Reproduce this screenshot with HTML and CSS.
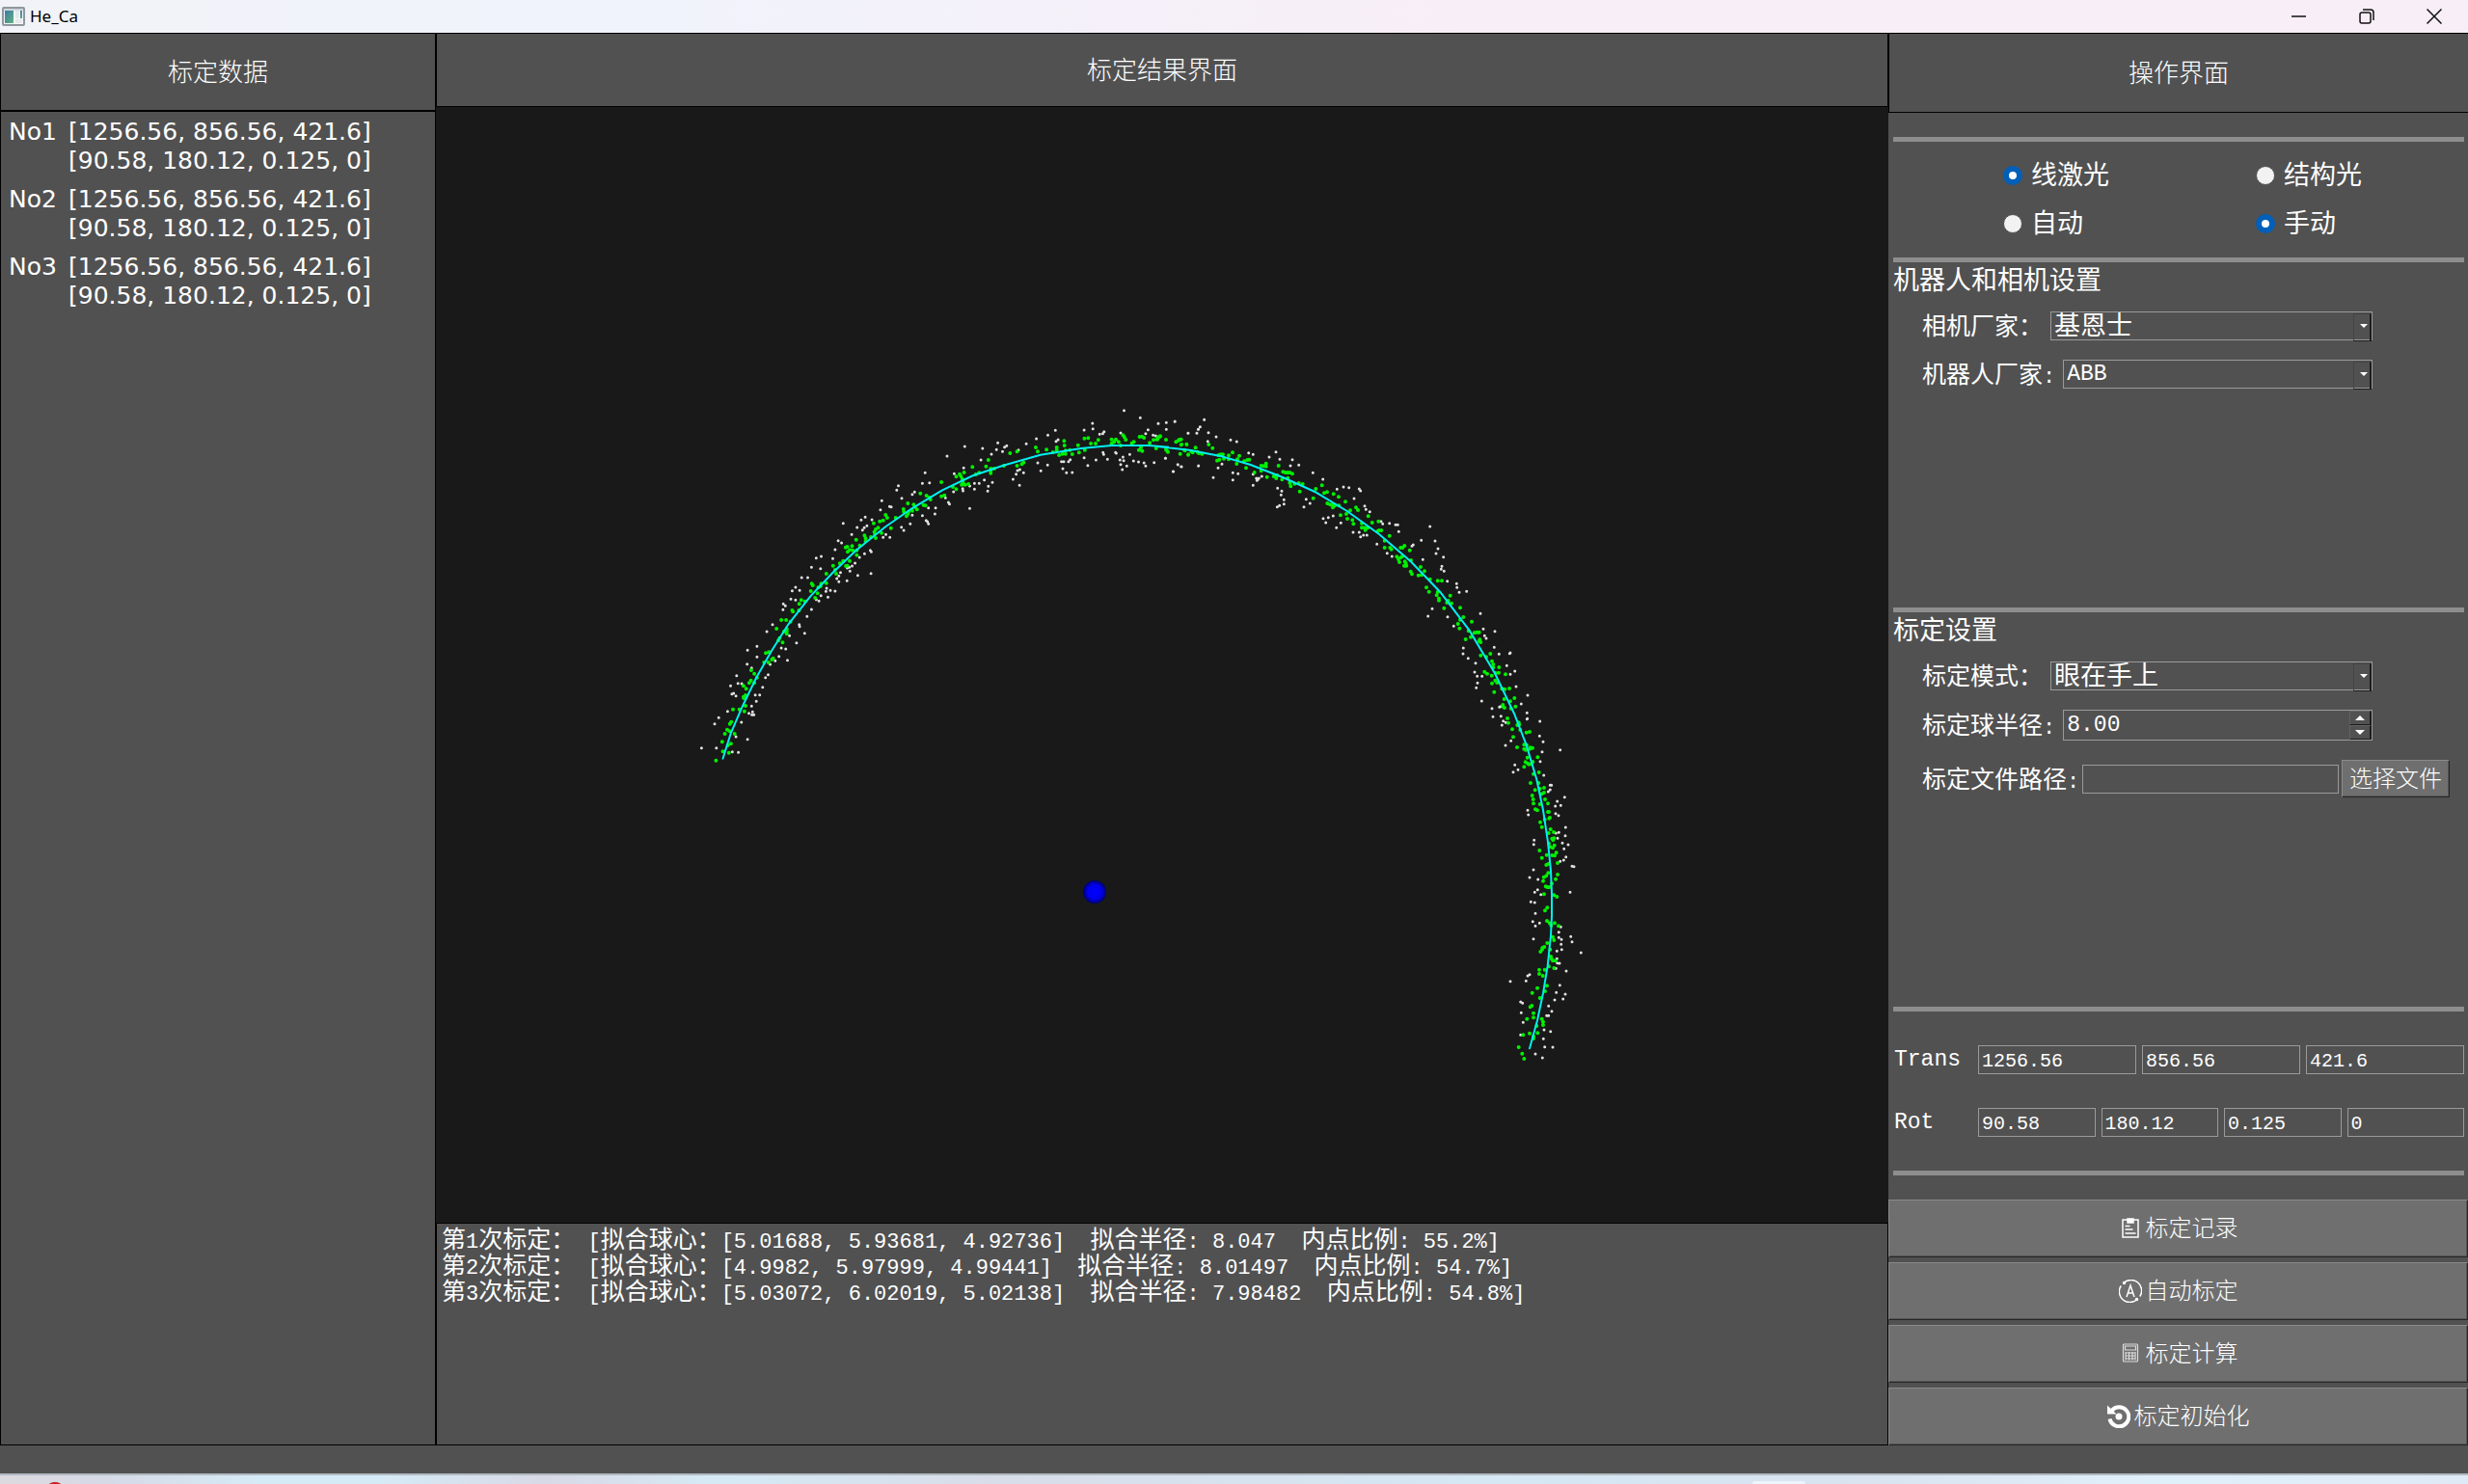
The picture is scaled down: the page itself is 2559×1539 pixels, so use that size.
FILE: index.html
```html
<!DOCTYPE html>
<html lang="zh-CN">
<head>
<meta charset="utf-8">
<title>He_Ca</title>
<link rel="stylesheet" href="styles.css">
</head>
<body>
<header class="titlebar">
  <svg class="app-icon" width="24" height="20" viewBox="0 0 24 20" aria-hidden="true">
    <defs><linearGradient id="pane" x1="0" y1="0" x2="1" y2="1"><stop offset="0" stop-color="#3f78a8"/><stop offset="1" stop-color="#5cb57c"/></linearGradient></defs>
    <rect x="1" y="1" width="22" height="18" rx="1" fill="#f4f6f8" stroke="#8f979f" stroke-width="2"/>
    <rect x="2" y="2" width="20" height="2" fill="#cfd6dc"/>
    <rect x="3" y="4" width="9" height="13" fill="url(#pane)"/>
    <rect x="14" y="4" width="4" height="8" fill="#e6e9ec"/>
    <rect x="19" y="4" width="2" height="8" fill="url(#pane)"/>
    <rect x="14" y="13" width="7" height="4" fill="#e6e9ec"/>
  </svg>
  <h1 class="app-name">He_Ca</h1>
  <div class="window-controls">
    <button type="button" aria-label="最小化"><svg width="16" height="16" viewBox="0 0 16 16"><path d="M0 8h15"/></svg></button>
    <button type="button" aria-label="还原"><svg width="16" height="16" viewBox="0 0 16 16"><rect x="1" y="4" width="11" height="11" rx="2"/><path d="M4 1h8a3 3 0 0 1 3 3v8"/></svg></button>
    <button type="button" aria-label="关闭"><svg width="16" height="16" viewBox="0 0 16 16"><path d="M0.500 0.500l15 15M15.500 0.500l-15 15"/></svg></button>
  </div>
</header>

<main class="workspace">
  <section class="data-panel">
    <h2 class="panel-title">标定数据</h2>
    <dl class="pose-list">
      <div class="pose"><dt>No1</dt><dd>[1256.56, 856.56, 421.6]<br>[90.58, 180.12, 0.125, 0]</dd></div>
      <div class="pose"><dt>No2</dt><dd>[1256.56, 856.56, 421.6]<br>[90.58, 180.12, 0.125, 0]</dd></div>
      <div class="pose"><dt>No3</dt><dd>[1256.56, 856.56, 421.6]<br>[90.58, 180.12, 0.125, 0]</dd></div>
    </dl>
  </section>

  <section class="result-panel">
    <h2 class="panel-title">标定结果界面</h2>
    <div class="viewer">
      <svg id="cloud" viewBox="452 111 1506 1157" role="img" aria-label="拟合点云">
        <defs><radialGradient id="ball"><stop offset="0" stop-color="#0000ff"/><stop offset="0.600" stop-color="#0000ee"/><stop offset="1" stop-color="#000070"/></radialGradient></defs>
        <path id="outliers" class="outliers"/>
        <path id="inliers" class="inliers"/>
        <path id="fit" class="fit"/>
        <circle cx="1135" cy="925" r="12" fill="url(#ball)"/>
      </svg>
    </div>
    <div class="log">
      <p>第<span class="num">1</span>次标定：<span class="num"> [</span>拟合球心：<span class="num">[5.01688, 5.93681, 4.92736]  </span>拟合半径<span class="num">: 8.047  </span>内点比例<span class="num">: 55.2%]</span></p>
      <p>第<span class="num">2</span>次标定：<span class="num"> [</span>拟合球心：<span class="num">[4.9982, 5.97999, 4.99441]  </span>拟合半径<span class="num">: 8.01497  </span>内点比例<span class="num">: 54.7%]</span></p>
      <p>第<span class="num">3</span>次标定：<span class="num"> [</span>拟合球心：<span class="num">[5.03072, 6.02019, 5.02138]  </span>拟合半径<span class="num">: 7.98482  </span>内点比例<span class="num">: 54.8%]</span></p>
    </div>
  </section>

  <section class="control-panel">
    <h2 class="panel-title">操作界面</h2>
    <form class="controls">
      <div class="modes">
        <label class="mode"><input type="radio" name="light" checked>线激光</label>
        <label class="mode"><input type="radio" name="light">结构光</label>
        <label class="mode"><input type="radio" name="drive">自动</label>
        <label class="mode"><input type="radio" name="drive" checked>手动</label>
      </div>
      <fieldset class="group group-devices">
        <legend>机器人和相机设置</legend>
        <div class="field">
          <label for="camera">相机厂家：</label>
          <span class="combo"><select id="camera"><option>基恩士</option></select></span>
        </div>
        <div class="field">
          <label for="robot">机器人厂家<span class="num">:</span></label>
          <span class="combo"><select id="robot" class="num"><option>ABB</option></select></span>
        </div>
      </fieldset>
      <fieldset class="group group-calibration">
        <legend>标定设置</legend>
        <div class="field">
          <label for="mode">标定模式：</label>
          <span class="combo"><select id="mode"><option>眼在手上</option></select></span>
        </div>
        <div class="field">
          <label for="radius">标定球半径<span class="num">:</span></label>
          <span class="spin"><input id="radius" class="num" type="number" step="0.01" value="8.00"><span class="spin-buttons"><button type="button" class="up" aria-label="增加"></button><button type="button" class="down" aria-label="减少"></button></span></span>
        </div>
        <div class="field file-field">
          <label for="path">标定文件路径<span class="num">:</span></label>
          <input id="path" class="box" type="text">
          <button type="button" class="push browse">选择文件</button>
        </div>
      </fieldset>
      <div class="coords">
        <div class="coord-row">
          <label for="tx">Trans</label>
          <input id="tx" class="box" type="text" value="1256.56">
          <input class="box" type="text" value="856.56" aria-label="Trans Y">
          <input class="box" type="text" value="421.6" aria-label="Trans Z">
        </div>
        <div class="coord-row">
          <label for="rx">Rot</label>
          <input id="rx" class="box" type="text" value="90.58">
          <input class="box" type="text" value="180.12" aria-label="Rot Y">
          <input class="box" type="text" value="0.125" aria-label="Rot Z">
          <input class="box" type="text" value="0" aria-label="Rot W">
        </div>
      </div>
      <div class="actions">
        <button type="button" class="push"><svg width="24" height="24" viewBox="0 0 24 24" class="line"><rect x="4" y="3" width="16" height="18"/><path d="M6.500 9.500h5M6.500 13h8M6.500 17h11"/><path d="M9 2h6v4H9z" fill="#fff"/></svg>标定记录</button>
        <button type="button" class="push"><svg width="24" height="24" viewBox="0 0 24 24" class="line"><path d="M5 3.500A11 11 0 0 1 21.800 17.500M19 20.500A11 11 0 0 1 2.200 6.500M8 18l4-12 4 12M9.500 14h5"/><circle cx="5.500" cy="3.500" r="1"/><circle cx="18.500" cy="20.500" r="1"/></svg>自动标定</button>
        <button type="button" class="push"><svg width="24" height="24" viewBox="0 0 24 24" class="line soft"><rect x="4.500" y="2" width="15" height="18" rx="1"/><path d="M6.500 4h11v4h-11zM6.500 11h11M6.500 14h11M6.500 17h11M7 10v8.500M10.500 10v8.500M14 10v8.500M17 10v8.500"/></svg>标定计算</button>
        <button type="button" class="push"><svg width="24" height="24" viewBox="0 0 24 24"><path d="M4.500 6A10 10 0 1 1 2.500 14.500" fill="none" stroke="#fff" stroke-width="4"/><path d="M0 0.500L0 9.500h9.500L6.500 6.500z" fill="#fff"/><circle cx="12" cy="12" r="3.500" fill="#fff"/></svg>标定初始化</button>
      </div>
    </form>
  </section>
</main>
<div class="statusbar"></div>
<footer class="taskbar">
  <svg class="tray-dot" width="12" height="3" viewBox="0 0 12 3" aria-hidden="true"><ellipse cx="6" cy="5" rx="7" ry="4" fill="#c5231c"/></svg>
  <span class="task-tile"></span>
</footer>
<script src="cloud.js"></script>
</body>
</html>
```
FILE: styles.css
```css
* { box-sizing: border-box; }

:root {
  --panel: #515151;
  --rule: #8e8e8e;
  --cjk: "Liberation Sans", "Noto Sans CJK SC", sans-serif;
  --mono: "Liberation Mono", "Noto Sans CJK SC", monospace;
}

body {
  margin: 0;
  min-height: 100vh;
  display: flex;
  flex-direction: column;
  background: var(--panel);
  color: #fff;
  font: 25px/30px var(--cjk);
}

h1, h2, p, dl, dd { margin: 0; font-weight: inherit; }
button, input, select { font: inherit; color: inherit; margin: 0; border-radius: 0; }

.num { font-family: var(--mono); font-size: 22px; line-height: 1; white-space: pre; }

/* Title bar */
.titlebar {
  display: flex;
  align-items: center;
  height: 35px;
  padding-left: 2px;
  border-bottom: 1px solid #000;
  background: linear-gradient(90deg, #f1f3f8, #f0f3fb 25%, #f8eef7 60%, #f8eef7);
  color: #000;
}
.app-icon { margin-top: -1px; }
.app-name { flex: 1; margin-left: 5px; font: 17px/34px "Noto Sans", sans-serif; }
.window-controls { display: flex; height: 34px; }
.window-controls button {
  width: 70px;
  padding: 0;
  border: 0;
  background: none;
}
.window-controls svg {
  display: block;
  margin: auto;
  fill: none;
  stroke: #111;
  stroke-width: 1.500;
}

/* Columns */
.workspace {
  flex: 1;
  display: grid;
  grid-template-columns: minmax(0, 452fr) minmax(0, 1506fr) minmax(0, 601fr);
}
.workspace > section { display: flex; flex-direction: column; }
.panel-title {
  display: flex;
  align-items: center;
  justify-content: center;
  font-size: 26px;
  font-weight: 300;
}

.data-panel { border: 1px solid #000; border-top: 0; }
.data-panel .panel-title { height: 81px; border-bottom: 2px solid #000; }
.pose-list {
  padding: 6px 8px;
  display: flex;
  flex-direction: column;
  gap: 10px;
  font: 25px/30px "DejaVu Sans", sans-serif;
}
.pose { display: flex; }
.pose dt { width: 62px; }

.result-panel .panel-title { height: 76px; border: 1px solid #000; border-top: 0; }
.viewer { flex: 1; min-height: 0; display: flex; background: #191919; }
.viewer svg { width: 100%; display: block; }
.viewer path { fill: none; stroke-linecap: round; }
.outliers { stroke: #e2e2e2; stroke-width: 3; }
.inliers { stroke: #00f000; stroke-width: 4; }
.fit { stroke: #00f0f0; stroke-width: 2; }
.log {
  height: 231px;
  padding: 3px 5px;
  border: 1px solid #000;
  line-height: 27px;
}
.log p { height: 27px; white-space: nowrap; }

/* Control panel */
.control-panel .panel-title {
  height: 82px;
  border-left: 1px solid #000;
  border-bottom: 1px solid #000;
}
.controls { flex: 1; display: flex; flex-direction: column; padding-top: 25px; }
.modes, .group, .coords {
  margin: 0 4px 0 5px;
  border: 0 solid var(--rule);
  border-top-width: 5px;
}
.modes {
  display: grid;
  grid-template-columns: 262fr 216fr;
  grid-auto-rows: 50px;
  padding: 10px 0 10px 114px;
  font-size: 27px;
}
.mode { display: flex; align-items: center; gap: 9px; }
.mode input {
  appearance: none;
  width: 20px;
  height: 20px;
  border: 1px solid var(--panel);
  border-radius: 50%;
  background: #f2f2f2;
}
.mode input:checked { border: 6px solid #005fb8; background: #fff; }

.group { min-width: 0; padding: 0; display: flex; flex-direction: column; gap: 20px; }
.group-devices { flex: 363; }
.group-calibration { flex: 414; }
.group legend {
  float: left;
  padding: 0;
  height: 38px;
  margin-bottom: -7px;
  font-size: 27px;
  line-height: 38px;
}
.field {
  display: flex;
  align-items: center;
  gap: 8px;
  margin-left: 30px;
  margin-right: 95px;
}
.field label { height: 30px; white-space: nowrap; }
.combo, .spin { position: relative; flex: 1; display: flex; }
.combo select, .spin input, .box {
  width: 100%;
  min-width: 0;
  height: 30px;
  border: 1px solid #9a9a9a;
  background: var(--panel);
  padding: 0 3px;
  line-height: 28px;
  outline: 0;
}
.combo select { appearance: none; font-size: 27px; }
.combo select.num, .spin .num { font-size: 23px; }
.combo::before {
  content: "";
  position: absolute;
  top: 2px;
  right: 1px;
  width: 16px;
  height: 27px;
  border: 1px solid #444;
  border-right: 2px solid #1c1c1c;
  border-bottom-color: #1c1c1c;
  pointer-events: none;
}
.combo::after, .up::after, .down::after {
  content: "";
  display: block;
  border: 4px solid transparent;
  border-bottom: 0;
  border-top-color: #fff;
}
.combo::after { position: absolute; right: 5px; top: 13px; pointer-events: none; }

.spin input { height: 32px; appearance: textfield; }
.spin input::-webkit-inner-spin-button { display: none; }
.spin-buttons {
  position: absolute;
  top: 1px;
  right: 1px;
  bottom: 1px;
  width: 23px;
  display: flex;
  flex-direction: column;
}
.spin-buttons button {
  flex: 1;
  padding: 0;
  display: flex;
  align-items: center;
  justify-content: center;
  background: var(--panel);
  border: 1px solid #636363;
  border-right: 2px solid #1c1c1c;
  border-bottom-color: #1c1c1c;
}
.up::after, .down::after { border-width: 5px 5px 0; }
.up::after { transform: rotate(180deg); }

.file-field { gap: 3px; margin-right: 15px; }

.push {
  border: 1px solid #262626;
  border-top-color: #8a8a8a;
  border-left-color: #8a8a8a;
  background: #6f6f6f;
  box-shadow: inset -1px -1px #555;
  font-size: 24px;
  font-weight: 300;
}
.browse { flex: none; width: 112px; height: 39px; padding: 0; }

.coords {
  padding: 35px 0 35px 1px;
  display: flex;
  flex-direction: column;
  gap: 35px;
  border-bottom-width: 5px;
  font-family: var(--mono);
  font-size: 22px;
}
.coord-row { display: flex; gap: 6px; }
.coord-row label { width: 81px; flex: none; padding-top: 1px; font-size: 23px; line-height: 29px; }
.coord-row .box { flex: 1; padding-top: 2px; font-size: 20px; line-height: 26px; }

.actions { margin-top: 25px; display: flex; flex-direction: column; gap: 5px; }
.actions .push {
  height: 60px;
  display: flex;
  align-items: center;
  justify-content: center;
  gap: 4px;
}
.line { fill: none; stroke: #fff; stroke-width: 1.500; }
.soft { stroke: #dcdcdc; stroke-width: 1.200; }

/* Bottom strips */
.statusbar { height: 29px; }
.taskbar {
  height: 11px;
  position: relative;
  border-top: 2px solid #b0b8c0;
  background: linear-gradient(90deg, #dcdadf, #d6d9e6 4%, #d5ecf7 11%, #d5ecf7 15%, #d8d9e6 22%, #d5eaf5 29%, #d8dde9 40%, #d5e8f4 60%, #d9e3f0 75%, #e0f0fb 88%, #dfeaf6);
}
.tray-dot { position: absolute; left: 51px; bottom: 0; }
.task-tile {
  position: absolute;
  left: 71%;
  bottom: 0;
  width: 55px;
  height: 3px;
  border-radius: 4px 4px 0 0;
  background: #eef4fb;
}
```
FILE: cloud.js
```js
// Scan sweeps of the calibration sphere. Each sweep has its own origin and
// step size; x,y pairs are in sweep steps.
const sweeps = [
  {
    x: 700, y: 400, sx: 550 / 1568, sy: 1 / 3,
    out: "78 1127 122 1127 169 1139 187 1141 214 1100 180 1092 117 1052 129 1033 155 1013 196 1047 218 1019 229 1015 227 1024 233 1024 226 997 240 982 237 962 250 962 259 938 164 934 186 926 197 927 168 959 173 957 180 965 182 902 226 878 213 866 267 908 275 899 242 844 214 823 242 811 281 867 296 856 307 842 332 854 314 816 327 819 359 800 338 778 271 765 288 743 383 770 367 743 368 749 390 718 403 696 319 697 326 685 320 679 342 664 356 667 346 638 368 637 356 627 374 597 392 597 403 565 430 569 417 536 432 531 466 538 417 665 425 670 431 653 452 658 446 640 448 630 459 637 473 639 484 610 478 600 484 592 489 581 508 607 540 590 579 584 517 577 509 567 515 565 523 561 532 552 545 534 560 523 577 512 580 517 473 510 482 482 492 489 522 463 497 428 538 441 554 449 559 442 567 436 550 418 562 409 582 417 615 472 635 472 623 463 607 386 611 358 634 376 639 377 676 450 669 440 695 430 701 403 670 350 701 338 708 331 655 325 660 311 731 404 742 419 746 423 749 430 768 399 770 380 749 380 731 304 752 302 739 271 811 368 808 363 799 349 804 219 856 189 871 382 823 330 851 327 850 320 871 312 885 322 885 304 899 304 914 293 924 328 926 313 938 301 825 274 853 256 904 231 909 195 935 213 950 199 968 205 974 191 980 187 954 178 999 291 1008 275 1012 264 1019 261 1030 271 1018 310 1015 200 1038 181 1068 165 1072 240 1081 265 1101 247 1102 154 1124 139 1126 173 1132 168 1146 258 1157 271 1174 270 1142 236 1149 236 1163 236 1168 230 1209 224 1220 248 1209 138 1235 134 1234 117 1255 151 1264 149 1268 143 1265 208 1267 214 1278 229 1244 231 1302 208 1304 210 1317 147 1327 77 1375 100 1315 231 1324 222 1326 233 1317 245 1322 261 1335 250 1344 214 1355 234 1370 237 1386 240 1391 250 1416 239 1391 149 1398 137 1428 118 1452 115 1452 136 1477 112 1413 154 1421 156 1450 226 1472 267 1486 245 1497 252 1547 250 1516 148 1542 148 1547 136 1552 128 1564 106",
    inl: "121 1166 159 1142 141 1138 156 1119 165 1114 139 1108 147 1083 176 1083 154 1070 161 1075 162 1052 166 1046 205 1013 190 1007 171 1007 208 996 203 972 202 968 208 963 210 943 202 934 219 925 224 917 234 925 242 908 234 896 225 885 263 861 276 861 286 852 290 848 268 832 277 829 318 799 305 793 309 785 330 772 330 764 330 757 322 765 300 756 341 734 328 729 314 729 348 703 346 699 366 699 367 679 373 667 384 671 414 660 421 646 401 639 407 621 404 616 423 628 430 624 432 616 447 614 447 585 476 585 473 573 467 560 487 553 497 545 505 561 509 560 516 545 510 517 516 511 525 512 523 499 509 501 504 503 537 527 537 512 535 479 546 497 563 484 563 475 560 466 579 471 593 474 590 461 589 455 593 447 600 442 610 458 587 428 605 422 615 419 627 411 622 402 638 443 652 411 684 406 688 399 690 393 675 384 676 392 688 366 705 370 709 377 715 385 701 389 725 335 743 342 752 348 755 354 734 371 740 373 787 300 787 344 796 341 821 315 831 322 831 283 841 275 845 282 849 290 851 300 847 308 857 308 867 306 854 270 879 253 889 276 899 271 919 251 926 231 933 258 933 265 933 272 943 258 972 249 990 210 1011 205 1030 239 1025 244 1011 249 1066 192 1072 205 1098 199 1117 207 1128 192 1128 200 1135 216 1145 212 1154 212 1154 202 1151 186 1150 172 1174 213 1167 200 1191 185 1194 208 1211 200 1210 164 1221 163 1229 180 1243 180 1251 169 1290 180 1290 167 1298 175 1303 167 1311 175 1317 186 1324 154 1328 160 1332 168 1350 179 1356 175 1373 159 1380 158 1386 162 1371 200 1377 192 1381 203 1403 178 1414 169 1424 167 1428 160 1434 158 1422 195 1451 199 1455 204 1451 168 1481 175 1490 168 1495 167 1497 183 1512 183 1493 212 1507 202 1517 214 1526 205 1538 193 1548 210 1558 212",
    fit: "141 1160 165 1080 200 995 240 908 285 825 335 742 400 655 465 583 535 512 620 440 700 382 790 325 880 280 970 248 1080 215 1200 195 1290 186 1400 186 1460 191"
  },
  {
    x: 1200, y: 400, sx: 1 / 3, sy: 1 / 3,
    out: "3 118 28 115 28 136 55 111 25 226 50 267 64 246 74 252 128 249 96 148 123 148 127 136 133 128 146 106 159 146 157 173 183 159 174 286 189 256 201 244 228 169 247 174 235 271 251 274 235 293 284 209 298 214 298 275 298 310 308 288 313 292 310 295 316 288 325 282 348 222 369 206 381 229 420 230 414 249 440 247 484 271 515 291 374 319 387 328 385 340 394 355 394 368 380 373 373 377 463 353 475 366 456 377 559 322 579 315 596 317 628 321 632 327 612 351 516 413 532 410 547 405 524 426 571 427 557 442 645 374 649 385 661 392 609 456 628 456 641 465 652 465 632 470 683 493 696 422 701 430 722 428 741 433 748 433 751 454 848 438 715 521 730 531 792 499 796 495 821 481 864 483 873 507 867 522 890 533 826 541 885 562 883 571 892 577 902 608 931 616 932 628 939 643 962 640 855 694 842 717 903 719 1005 709 922 748 1014 757 1050 764 1018 778 1023 786 952 816 951 834 1048 814 1063 835 1096 833 1098 831 967 848 990 863 987 891 995 904 1010 904 1087 871 1112 888 1098 898 996 925 992 940 1116 936 1152 963 1009 981 1041 1004 1064 1000 1067 998 1132 990 1150 1018 1150 1037",
    inl: "0 167 3 161 9 157 28 200 33 206 58 175 66 170 74 167 74 184 91 182 71 212 84 200 96 215 110 208 119 193 125 206 139 212 160 183 172 194 186 233 193 230 190 216 197 214 204 214 207 227 222 217 222 229 234 208 247 243 249 229 255 218 270 235 280 231 286 230 276 256 302 270 323 265 323 249 330 250 338 242 338 251 377 249 341 284 362 282 370 288 373 279 388 292 391 268 398 270 405 270 412 270 420 274 406 287 412 302 415 313 427 305 440 303 452 306 443 329 493 321 512 310 485 350 519 334 528 331 548 337 564 346 529 366 538 370 545 370 546 379 552 373 565 373 585 361 570 403 588 399 600 388 618 379 624 387 591 414 607 418 610 430 636 428 656 406 668 426 636 442 645 442 647 449 655 442 688 422 686 452 690 450 697 450 707 482 722 467 707 504 724 504 728 509 757 504 763 504 769 498 785 512 745 532 750 540 757 535 762 532 753 549 770 547 773 553 768 560 775 560 789 543 788 578 792 586 819 564 812 590 822 589 831 577 848 602 837 628 845 641 872 607 885 607 872 642 869 652 876 662 876 668 911 653 901 675 905 669 915 677 892 692 942 691 952 720 942 728 935 741 940 755 978 734 968 763 986 769 993 767 1001 767 975 782 959 789 1003 790 1001 795 1006 798 1036 834 1006 839 1023 844 1041 857 1045 867 1045 877 1063 876 1018 890 1026 896 1040 902 1052 894 1062 893 1083 898 1051 917 1057 924 1041 926 1048 953 1072 943 1081 944 1095 942 1079 975 1111 972 1098 982 1075 993 1075 998 1080 1002 1100 1004 1114 998",
    fit: "0 189 100 200 200 220 290 246 390 285 490 330 590 390 690 462 790 548 880 642 970 760 1050 895 1110 1020"
  },
  {
    x: 1450, y: 740, sx: 1 / 3, sy: 1 / 3,
    out: "294 10 319 8 326 23 334 28 322 36 401 16 440 24 439 70 450 88 350 85 333 99 447 119 503 113 441 149 362 160 372 175 357 182 452 192 476 223 472 223 472 237 466 243 517 260 494 273 488 288 505 286 402 301 404 315 489 311 498 317 520 354 490 372 499 370 519 380 495 388 422 394 421 407 510 403 528 408 515 421 521 446 514 456 503 460 540 475 546 476 420 486 408 510 434 516 433 548 424 556 443 563 534 556 412 586 424 588 426 622 418 647 439 652 426 661 505 664 499 680 499 697 507 703 536 694 540 710 506 718 508 734 493 739 568 744 420 701 493 763 494 776 501 777 490 793 522 801 348 833 397 832 402 816 408 812 502 845 491 868 519 873 486 891 512 888 380 897 386 901 467 910 477 926 382 931 461 940 467 940 388 961 453 984 473 989 380 1000 451 1012 455 1037 480 1038 426 1059 448 1071",
    inl: "339 15 342 29 374 28 370 36 376 34 354 49 379 51 398 59 408 57 357 73 391 97 399 98 369 105 391 110 396 113 408 110 410 106 417 107 433 136 401 137 395 151 402 155 406 158 413 157 418 150 391 166 420 188 437 183 411 216 436 216 425 238 440 234 453 231 453 246 446 250 416 255 419 267 456 267 420 280 440 282 465 280 426 298 432 301 465 306 468 306 469 326 471 324 455 330 441 338 446 353 473 360 483 369 467 372 478 389 484 388 481 394 468 404 485 410 472 415 480 418 439 426 491 433 461 440 478 441 486 442 446 449 466 468 460 471 495 465 466 496 460 505 452 509 495 501 489 515 450 521 477 529 458 538 463 540 470 540 453 562 484 565 493 570 463 604 456 613 462 645 470 652 486 652 475 659 498 661 480 695 484 705 463 714 454 726 448 729 447 734 442 741 472 734 474 756 476 763 480 769 488 769 468 787 484 792 438 797 455 797 438 810 449 816 462 847 432 854 416 869 456 864 440 885 415 909 410 913 420 932 420 946 400 950 446 950 450 959 450 969 430 972 388 1000 408 995 433 994 420 1004 420 1011 374 1038 385 1058 391 1074",
    fit: "360 0 397 95 430 205 450 300 465 400 474 490 477 560 477 630 474 690 464 785 450 870 432 955 408 1042"
  }
];

function place(sweep, key) {
  const n = sweep[key].split(" ").map(Number);
  const pts = [];
  for (let i = 0; i < n.length; i += 2) {
    pts.push((sweep.x + n[i] * sweep.sx).toFixed(1) + " " + (sweep.y + n[i + 1] * sweep.sy).toFixed(1));
  }
  return pts;
}

const all = key => sweeps.flatMap(s => place(s, key));
const dots = pts => pts.map(p => "M" + p + "h0").join("");

document.getElementById("outliers").setAttribute("d", dots(all("out")));
document.getElementById("inliers").setAttribute("d", dots(all("inl")));
document.getElementById("fit").setAttribute("d", "M" + all("fit").join("L"));
```
